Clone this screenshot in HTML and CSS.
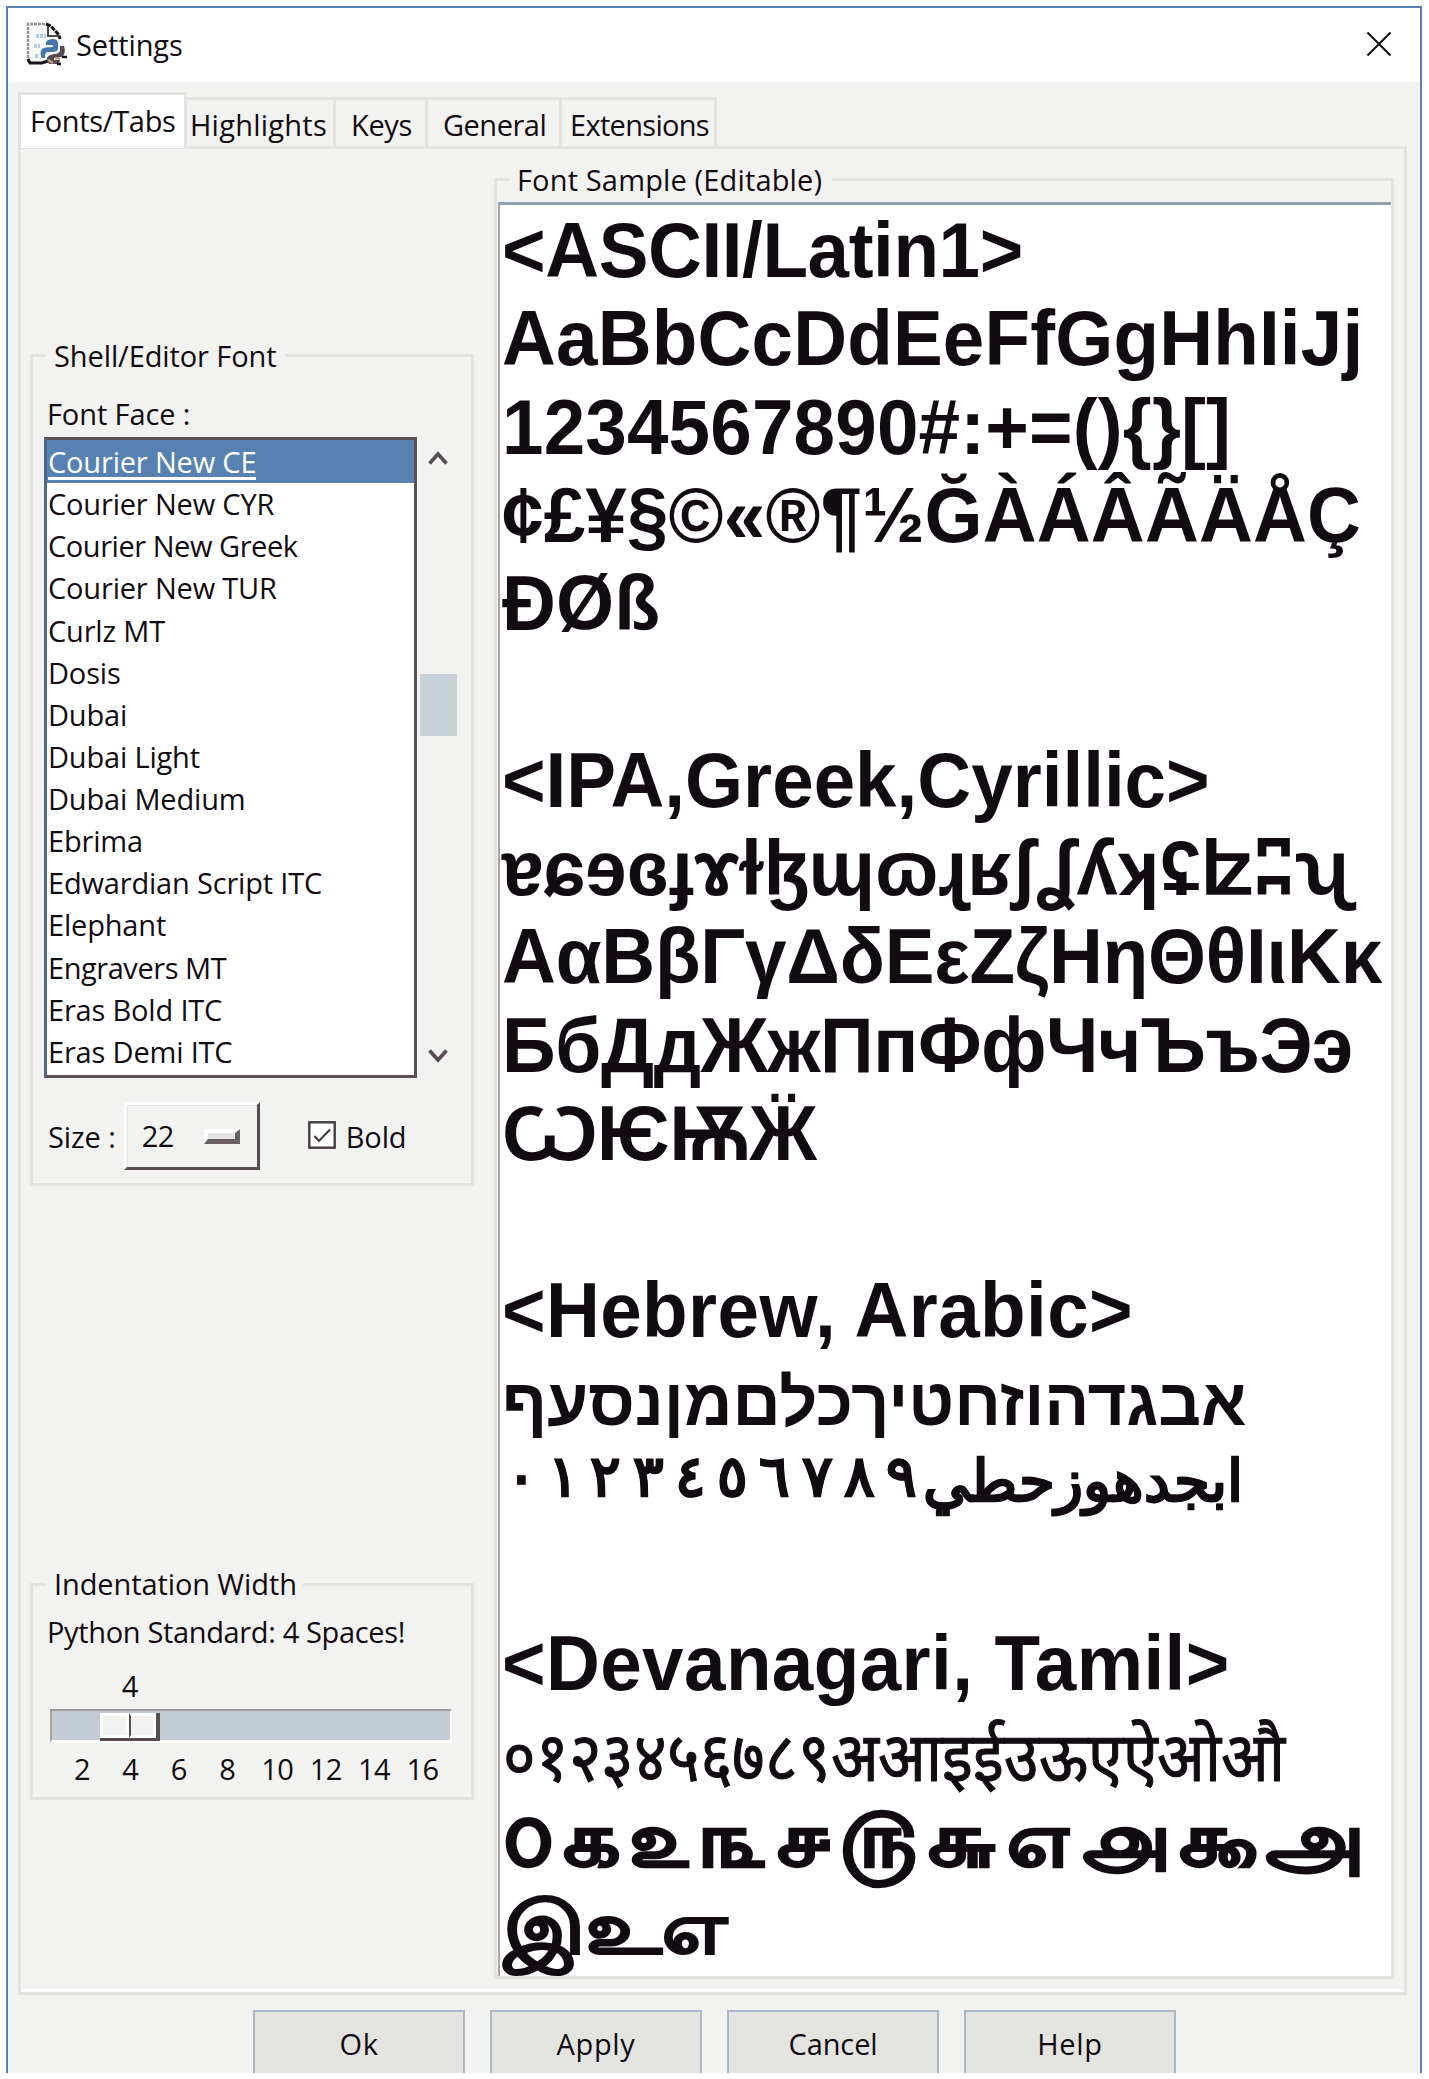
FILE: index.html
```html
<!DOCTYPE html>
<html lang="en">
<head>
<meta charset="utf-8">
<title>Settings</title>
<link rel="stylesheet" href="styles.css">
</head>
<body>
<div class="window">
  <header class="titlebar">
    <svg class="app-icon" width="42" height="44" viewBox="0 0 42 44">
      <path d="M2 2H22L33 13V41H2Z" fill="#f6f7f8"/>
      <path d="M2 40V2H21" fill="none" stroke="#9c9188" stroke-width="2.4" stroke-dasharray="3 1"/>
      <path d="M20 2L25 4L33 13L34 17" fill="none" stroke="#17131a" stroke-width="3" stroke-dasharray="5 1"/>
      <path d="M22 4V14H33" fill="none" stroke="#4a4446" stroke-width="2"/>
      <path d="M10 14H20M8 24H14M9 34H13" stroke="#b9cbdc" stroke-width="4" stroke-dasharray="3 1"/>
      <path d="M2 37L4 41H16L22 39" fill="none" stroke="#17131a" stroke-width="3"/>
      <path d="M22 18Q31 15 32 21V27Q31 30 26 30H21Q19 31 19 36H16Q13 31 16 27Q18 25 27 25V23H20Q19 20 22 18Z" fill="#4477ac"/>
      <path d="M34 24H38Q40 30 37 34Q34 36 28 36V38H34L33 42H24Q20 41 21 36Q22 33 28 32Q34 32 34 28Z" fill="#554b50"/>
      <path d="M22 38L27 41M29 36L34 37" stroke="#c3a17a" stroke-width="2.4"/>
      <path d="M36 35H41M31 42H35" stroke="#17131a" stroke-width="2.6"/>
    </svg>
    <h1>Settings</h1>
    <svg class="close" width="26" height="26" viewBox="0 0 26 26"><path d="M1.5 1.5L24.5 24.5M24.5 1.5L1.5 24.5" fill="none" stroke="#141014" stroke-width="2.1"/></svg>
  </header>

  <nav class="tabs">
    <span class="tab active">Fonts/Tabs</span>
    <span class="tab highlights">Highlights</span>
    <span class="tab keys">Keys</span>
    <span class="tab general">General</span>
    <span class="tab extensions">Extensions</span>
  </nav>

  <main class="pane">
    <div class="left">
      <section class="group font-group">
        <h2 class="legend">Shell/Editor Font</h2>
        <p class="face-label">Font Face :</p>
        <div class="list-row">
          <ul class="listbox">
            <li class="selected"><span>Courier New CE</span></li>
            <li>Courier New CYR</li>
            <li class="tight">Courier New Greek</li>
            <li>Courier New TUR</li>
            <li>Curlz MT</li>
            <li>Dosis</li>
            <li>Dubai</li>
            <li>Dubai Light</li>
            <li>Dubai Medium</li>
            <li>Ebrima</li>
            <li>Edwardian Script ITC</li>
            <li>Elephant</li>
            <li class="tight">Engravers MT</li>
            <li>Eras Bold ITC</li>
            <li>Eras Demi ITC</li>
          </ul>
          <div class="scrollbar">
            <svg class="up" width="20" height="16" viewBox="0 0 20 16"><path d="M1.5 13.5L10 4L18.5 13.5" fill="none" stroke="#574c50" stroke-width="3.6"/></svg>
            <div class="thumb"></div>
            <svg class="down" width="20" height="16" viewBox="0 0 20 16"><path d="M1.5 2.5L10 12L18.5 2.5" fill="none" stroke="#574c50" stroke-width="3.6"/></svg>
          </div>
        </div>
        <div class="size-row">
          <label>Size :</label>
          <div class="option"><span>22</span><i class="indicator"></i></div>
          <svg class="check" width="28" height="28" viewBox="0 0 28 28"><rect x="1.3" y="1.3" width="25.4" height="25.4" fill="#fff" stroke="#453c42" stroke-width="2.4"/><path d="M6.5 15L11 20L22 8.5" fill="none" stroke="#453c42" stroke-width="2.2"/></svg>
          <label>Bold</label>
        </div>
      </section>

      <section class="group indent-group">
        <h2 class="legend">Indentation Width</h2>
        <p class="standard">Python Standard: 4 Spaces!</p>
        <p class="value">4</p>
        <div class="trough"><div class="slider"><i></i><i></i></div></div>
        <div class="ticks"><span>2</span><span>4</span><span>6</span><span>8</span><span>10</span><span>12</span><span>14</span><span>16</span></div>
      </section>
    </div>

    <section class="group sample-group">
      <h2 class="legend">Font Sample (Editable)</h2>
      <div class="sample">
        <p class="title">&lt;ASCII/Latin1&gt;</p>
        <p class="latin">AaBbCcDdEeFfGgHhIiJj</p>
        <p class="latin">1234567890#:+=(){}[]</p>
        <p class="latin">¢£¥§©«®¶½ĞÀÁÂÃÄÅÇ</p>
        <p class="latin">ÐØß</p>
        <p></p>
        <p>&lt;IPA,Greek,Cyrillic&gt;</p>
        <p class="ipa">ɐɕɘɞɟɤɫɮɰɷɻʁʃʆʎʞʢʫʭʯ</p>
        <p class="greek">ΑαΒβΓγΔδΕεΖζΗηΘθΙιΚκ</p>
        <p class="cyrillic">БбДдЖжПпФфЧчЪъЭэ</p>
        <p class="cyrillic">ѠѤѬӜ</p>
        <p></p>
        <p class="loose">&lt;Hebrew, Arabic&gt;</p>
        <p class="hebrew">אבגדהוזחטיךכלםמןנסעף</p>
        <p class="arabic"><span class="letters">ابجدهوزحطي</span><span class="digits"><b>٠</b><b>١</b><b>٢</b><b>٣</b><b>٤</b><b>٥</b><b>٦</b><b>٧</b><b>٨</b><b>٩</b></span></p>
        <p></p>
        <p class="loose">&lt;Devanagari, Tamil&gt;</p>
        <p class="devanagari">०१२३४५६७८९अआइईउऊएऐओऔ</p>
        <p class="tamil numerals">௦௧௨௩௪௫௬௭௮௯அ</p>
        <p class="tamil">இஉஎ</p>
      </div>
    </section>
  </main>

  <footer class="buttons">
    <button>Ok</button>
    <button>Apply</button>
    <button class="cancel">Cancel</button>
    <button>Help</button>
  </footer>
</div>
</body>
</html>
```
FILE: styles.css
```css
* { box-sizing: border-box; margin: 0; padding: 0; }

body {
  height: 2079px;
  overflow: hidden;
  padding: 6px 0 0 6px;
  background: #fff;
  color: #120c12;
  font: 29px/40px "Open Sans", "Noto Sans", sans-serif;
  letter-spacing: -0.1px;
}

h1, h2 { font: inherit; }

.window {
  display: flex;
  flex-direction: column;
  width: 1416px;
  height: 2067px;
  border: 2px solid #5681b0;
  border-bottom: 0;
  background: #f2f2f0;
  overflow: hidden;
}

.titlebar {
  display: flex;
  flex: none;
  height: 74px;
  padding: 0 28px 0 18px;
  background: #fff;
}
.titlebar h1 { margin: 17px 0 0 8px; }
.app-icon { margin-top: 14px; }
.close { margin: 23px 0 0 auto; }

.tabs {
  display: flex;
  flex: none;
  align-items: flex-end;
  height: 64px;
  padding-left: 10px;
}
.tab {
  flex: none;
  height: 49px;
  border-top: 3px solid #e2e2e0;
  border-right: 3px solid #e2e2e0;
  line-height: 40px;
  padding-top: 5px;
}
.tab.active {
  position: relative;
  width: 169px;
  height: 56px;
  margin-bottom: -2px;
  padding: 6px 0 0 9px;
  border-left: 3px solid #e2e2e0;
  background: #fff;
  letter-spacing: -0.3px;
}
.highlights { width: 149px; padding-left: 3px; letter-spacing: 0.24px; }
.keys { width: 92px; padding-left: 15px; letter-spacing: -0.35px; }
.general { width: 134px; padding-left: 15px; letter-spacing: -0.5px; }
.extensions { width: 155px; padding-left: 8px; letter-spacing: -0.69px; }

.pane {
  display: flex;
  flex: none;
  width: 1389px;
  height: 1849px;
  margin-left: 10px;
  border: 3px solid #e2e2e0;
  box-shadow: inset 0 -3px #fff;
}

.left { width: 444px; margin-left: 9px; padding-top: 205px; }
.group { border: 3px solid #e2e2e0; }
.legend {
  width: 239px;
  height: 40px;
  margin: -21px 0 0 13px;
  padding-left: 8px;
  background: #f2f2f0;
  white-space: nowrap;
}

.font-group { height: 832px; }
.face-label { margin: 18px 0 0 14px; }
.list-row { display: flex; gap: 3px; margin: 3px 0 0 11px; }
.listbox {
  width: 373px;
  height: 641px;
  border: 3px solid #5a5056;
  border-left-color: #50698a;
  background: #fff;
  list-style: none;
}
.listbox li { height: 42.14px; padding-left: 1px; line-height: 44px; white-space: nowrap; letter-spacing: -0.18px; }
.listbox .tight { letter-spacing: -0.45px; }
.listbox .selected { background: #5681b0; color: #fff; box-shadow: 0 1px #5681b0; }
.selected span { display: inline-block; height: 40px; border-bottom: 3px solid #fff; }

.scrollbar {
  display: flex;
  flex-direction: column;
  align-items: center;
  width: 37px;
  height: 640px;
}
.up { margin: 13px 1px 0 0; }
.thumb { width: 37px; height: 62px; margin: 208px 0 auto; background: #c8d0d8; }
.down { margin: 0 1px 13px 0; }

.size-row { display: flex; align-items: center; margin: 24px 0 0 15px; height: 68px; }
.size-row label { position: relative; top: 1px; }
.option {
  display: flex;
  align-items: center;
  width: 136px;
  height: 68px;
  margin-left: 8px;
  padding-left: 15px;
  border: 3px solid;
  border-color: #fff #574c50 #574c50 #fff;
  box-shadow: inset 1px 1px #e2e2e0;
}
.option span { width: 32px; letter-spacing: -0.6px; }
.indicator {
  width: 36px;
  height: 15px;
  margin-left: 30px;
  border: solid;
  border-width: 4px 5px 5px 4px;
  border-color: #fff #6a6064 #6a6064 #fff;
  background: #e8e6e2;
}
.check { margin: 0 10px 2px 48px; }

.indent-group { height: 217px; margin-top: 397px; }
.indent-group .legend { width: 257px; margin-top: -22px; }
.standard { margin: 8px 0 0 14px; letter-spacing: -0.35px; }
.value { width: 48px; margin: 14px 0 0 73px; text-align: center; }
.trough {
  width: 402px;
  height: 34px;
  margin: 3px 0 0 17px;
  padding: 2px 0 0 50px;
  border: solid;
  border-width: 2px 2px 3px 2px;
  border-color: #a29a98 #f8f8f8 #fff #b0a296;
  background: #c3ccd4;
}
.slider {
  display: flex;
  width: 60px;
  height: 28px;
  margin-left: -2px;
  border: solid #574c50;
  border-width: 0 4px 3px 0;
}
.slider i { flex: 1; border: 3px solid #fff; background: #f2f2f0; }
.slider i + i { border-left: 2px solid #574c50; }
.ticks { display: flex; margin: 6px 0 0 25px; }
.ticks span { width: 48.4px; text-align: center; }
.ticks span:nth-child(n+5) { padding-left: 3px; letter-spacing: -0.6px; }

.sample-group { width: 900px; height: 1801px; margin: 29px 0 0 20px; }
.sample-group .legend { width: 322px; margin-top: -21px; padding-left: 7px; letter-spacing: 0.15px; }
.sample {
  width: 893px;
  height: 1774px;
  margin: 2px 0 0 1px;
  padding: 2px 0 0 2px;
  border-top: 3px solid #8f9fb4;
  border-left: 2px solid #a8a4a2;
  background: #fff;
  font: bold 74.6px/88.3px "Liberation Sans", Arial, sans-serif;
  letter-spacing: 0;
}
.sample p {
  height: 88.3px;
  white-space: nowrap;
  transform: scaleY(1.055);
  transform-origin: 0 70px;
}
.sample .title { letter-spacing: -0.4px; }
.sample .latin { letter-spacing: 0.17px; }
.sample .ipa { letter-spacing: 0.08px; }
.sample .greek { letter-spacing: -0.2px; }
.sample .cyrillic { letter-spacing: -0.4px; }
.sample .loose { letter-spacing: 0.4px; }
.sample .hebrew { font-size: 66.8px; transform: translateY(3px); }
.sample .arabic {
  display: flex;
  flex-direction: row-reverse;
  justify-content: flex-end;
  transform: translate(-2px, -6px);
  -webkit-text-stroke: 0.8px #120c12;
}
.letters { font-size: 58px; }
.digits { display: flex; margin-top: -5px; font-size: 57px; }
.digits b { width: 42.3px; text-align: center; }
.sample .devanagari { font-weight: normal; transform: translate(1px, 3px) scale(0.84, 0.92); -webkit-text-stroke: 1.2px #120c12; }
.sample .tamil { transform: translate(2px, -2px) scale(1.12, 0.97); -webkit-text-stroke: 2px #120c12; }
.sample .numerals { letter-spacing: 5.6px; transform: translate(1px, 0) scale(1.2, 1.01); }

.buttons { display: flex; flex: none; gap: 25px; margin: 15px 0 0 245px; height: 62px; }
.buttons button {
  width: 212px;
  height: 90px;
  padding-bottom: 22px;
  border: 2px solid #a9b8c6;
  background: #e3e3e0;
  color: inherit;
  font: inherit;
  letter-spacing: 0.7px;
}
.buttons .cancel { letter-spacing: -0.1px; }
```
